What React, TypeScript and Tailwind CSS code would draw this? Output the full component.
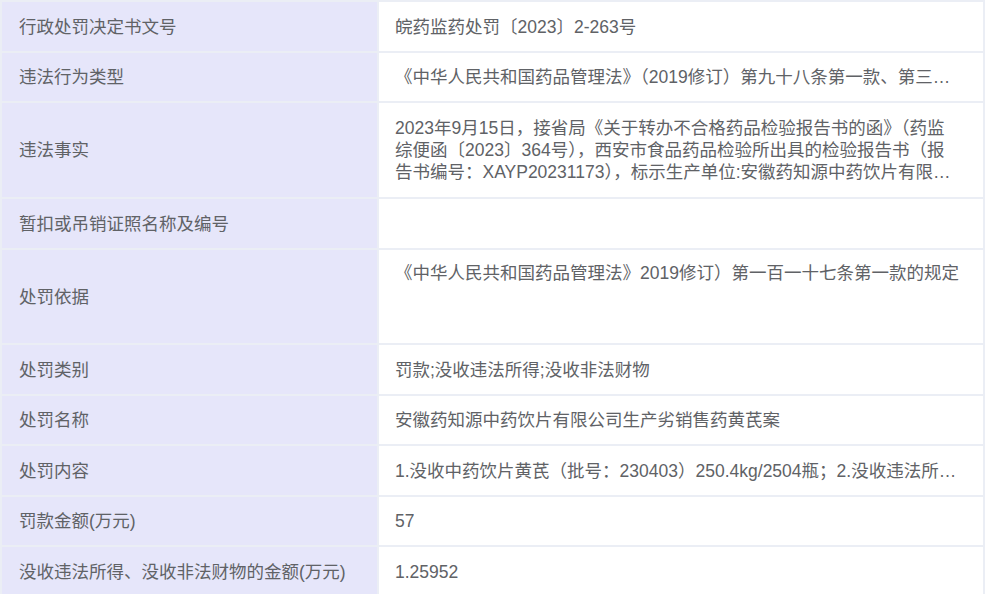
import React from "react";

type Row = {
  label: string;
  value: string;
  h: string;
  mode: "one" | "three" | "top";
};

const rows: Row[] = [
  { label: "行政处罚决定书文号", value: "皖药监药处罚〔2023〕2-263号", h: "h-[51px]", mode: "one" },
  {
    label: "违法行为类型",
    value:
      "《中华人民共和国药品管理法》（2019修订）第九十八条第一款、第三款第（一）项、第一百一十七条第一款",
    h: "h-[50px]",
    mode: "one",
  },
  {
    label: "违法事实",
    value:
      "2023年9月15日，接省局《关于转办不合格药品检验报告书的函》（药监综便函〔2023〕364号），西安市食品药品检验所出具的检验报告书（报告书编号：XAYP20231173），标示生产单位:安徽药知源中药饮片有限公司，批号为230403的黄芪，经检验不符合规定。",
    h: "h-[96px]",
    mode: "three",
  },
  { label: "暂扣或吊销证照名称及编号", value: "", h: "h-[51px]", mode: "one" },
  {
    label: "处罚依据",
    value: "《中华人民共和国药品管理法》2019修订）第一百一十七条第一款的规定",
    h: "h-[95px]",
    mode: "top",
  },
  { label: "处罚类别", value: "罚款;没收违法所得;没收非法财物", h: "h-[51px]", mode: "one" },
  { label: "处罚名称", value: "安徽药知源中药饮片有限公司生产劣销售药黄芪案", h: "h-[50px]", mode: "one" },
  {
    label: "处罚内容",
    value:
      "1.没收中药饮片黄芪（批号：230403）250.4kg/2504瓶；2.没收违法所得12595.2元；3.罚款57万元。",
    h: "h-[51px]",
    mode: "one",
  },
  { label: "罚款金额(万元)", value: "57", h: "h-[50px]", mode: "one" },
  { label: "没收违法所得、没收非法财物的金额(万元)", value: "1.25952", h: "h-[51px]", mode: "one" },
];

const marks = [
  { x: 560, y: 20 },
  { x: 440, y: 150 },
  { x: -40, y: 120 },
  { x: 180, y: 480 },
  { x: 690, y: 470 },
  { x: 230, y: 300 },
  { x: 820, y: 200 },
];

export default function App() {
  return (
    <div
      className="relative w-[987px] h-[594px] overflow-hidden bg-white text-[#606266] text-[17.5px]"
      style={{ fontFamily: '"Liberation Sans", "Noto Sans CJK SC", sans-serif' }}
    >
      <div className="w-[985px] border-t-2 border-l-2 border-r-2 border-[#ebeef5]">
        {rows.map((r, i) => (
          <div key={i} className={`flex border-b-2 border-[#ebeef5] ${r.h}`}>
            <div className="w-[377px] shrink-0 bg-[#e6e6fa] border-r-2 border-[#ebeef5] pl-[17px] flex items-center leading-[22px] whitespace-nowrap">
              {r.label}
            </div>
            {r.mode === "one" && (
              <div className="flex-1 min-w-0 pl-[16px] pr-[20px] flex items-center leading-[22px]">
                <div className="truncate">{r.value}</div>
              </div>
            )}
            {r.mode === "three" && (
              <div className="flex-1 min-w-0 pl-[16px] pr-[22px] flex items-center leading-[22px]">
                <div className="line-clamp-3">{r.value}</div>
              </div>
            )}
            {r.mode === "top" && (
              <div className="flex-1 min-w-0 pl-[16px] pt-[12px] leading-[22px]">
                <div className="whitespace-nowrap">{r.value}</div>
              </div>
            )}
          </div>
        ))}
      </div>
      <div className="pointer-events-none absolute inset-0">
        {marks.map((m, i) => (
          <div
            key={i}
            className="absolute -rotate-[55deg] text-[24px] tracking-[8px] text-black/[0.025] whitespace-nowrap"
            style={{ left: m.x, top: m.y }}
          >
            吉林野查
          </div>
        ))}
      </div>
    </div>
  );
}
